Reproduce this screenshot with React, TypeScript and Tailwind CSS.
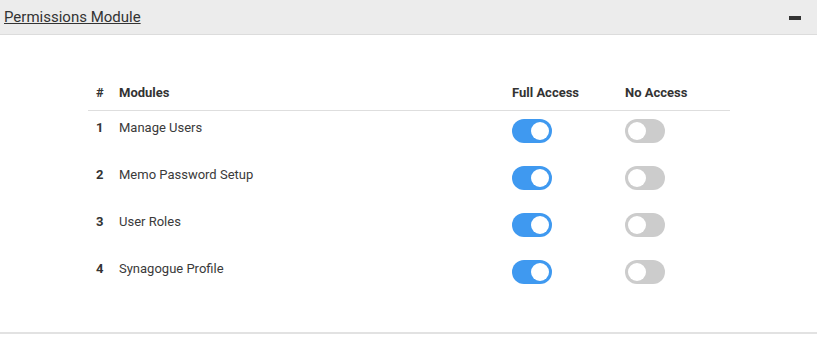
import { useState } from 'react'

const modules = ['Manage Users', 'Memo Password Setup', 'User Roles', 'Synagogue Profile']

function Toggle({ on, onClick }: { on: boolean; onClick: () => void }) {
  return (
    <button
      onClick={onClick}
      className={`relative block w-[40px] h-[24px] rounded-full ${on ? 'bg-[#3f99f0]' : 'bg-[#cccccc]'}`}
    >
      <span
        className={`absolute top-[3px] w-[18px] h-[18px] rounded-full bg-white ${on ? 'left-[19px]' : 'left-[3px]'}`}
      />
    </button>
  )
}

export default function App() {
  const [access, setAccess] = useState<boolean[]>([true, true, true, true])

  function set(i: number, v: boolean) {
    setAccess(prev => prev.map((a, j) => (j === i ? v : a)))
  }

  return (
    <div className="w-[817px] h-[351px] bg-white text-[#333] font-['Roboto',sans-serif]">
      <div className="h-[35px] bg-[#ececec] border-b border-[#dcdcdc] flex items-center justify-between pl-[4px] pr-[16px]">
        <a href="#" className="text-[15px] underline text-[#333] leading-[20px]">
          Permissions Module
        </a>
        <span className="block w-[12px] h-[4px] bg-[#333] mt-[1px]" />
      </div>

      <div className="pt-[40px] pb-[33px] border-b-2 border-[#e2e2e2] h-[299px]">
        <div className="ml-[88px] w-[642px]">
          <div className="grid grid-cols-[31px_393px_113px_1fr] h-[36px] border-b border-[#dedede] text-[13px] font-bold leading-[20px] pt-[8px]">
            <div className="pl-[8px]">#</div>
            <div>Modules</div>
            <div>Full Access</div>
            <div>No Access</div>
          </div>
          {modules.map((m, i) => (
            <div key={m} className="grid grid-cols-[31px_393px_113px_1fr] h-[47px] text-[13px] leading-[20px]">
              <div className="pl-[8px] pt-[7px] font-bold">{i + 1}</div>
              <div className="pt-[7px] text-[#3a3a3a]">{m}</div>
              <div className="pt-[8px]">
                <Toggle on={access[i]} onClick={() => set(i, true)} />
              </div>
              <div className="pt-[8px]">
                <Toggle on={!access[i]} onClick={() => set(i, false)} />
              </div>
            </div>
          ))}
        </div>
      </div>
    </div>
  )
}
